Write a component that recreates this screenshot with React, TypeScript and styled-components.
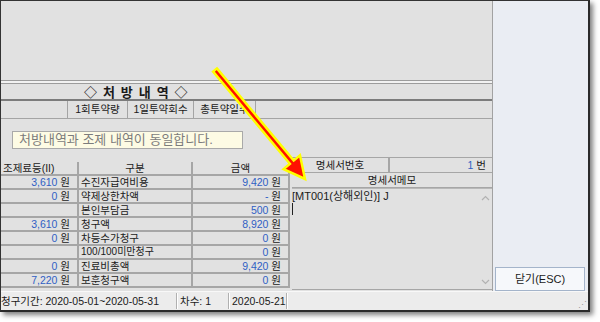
import React from 'react'
import styled, { createGlobalStyle } from 'styled-components'

const GlobalStyle = createGlobalStyle`
  html, body {
    margin: 0;
    background: #ffffff;
  }
  body {
    font-family: "Liberation Sans", "Noto Sans CJK KR", sans-serif;
    font-size: 10.5px;
    color: #1a1a1a;
  }
`

type Row = { charge?: string; label: string; amount: string; small?: boolean }

const rows: Row[] = [
    { charge: '3,610', label: '수진자급여비용', amount: '9,420' },
    { charge: '0', label: '약제상한차액', amount: '-' },
    { label: '본인부담금', amount: '500' },
    { charge: '3,610', label: '청구액', amount: '8,920' },
    { charge: '0', label: '차등수가청구', amount: '0' },
    { label: '100/100미만청구', amount: '0', small: true },
    { charge: '0', label: '진료비총액', amount: '9,420' },
    { charge: '7,220', label: '보훈청구액', amount: '0' },
]

const Arrow = () => (
    <ArrowLayer width="600" height="322" viewBox="0 0 600 322">
        <polygon
            points="216.9,68.4 293.7,160.6 300,155.3 305,179 283.6,169.1 289.9,163.8 213.1,71.6"
            fill="#ff1000"
            stroke="#ffff00"
            strokeWidth="2.5"
            strokeLinejoin="miter"
        />
    </ArrowLayer>
)

const Chevron = ({ down }: { down?: boolean }) => (
    <svg width="9" height="6" viewBox="0 0 9 6">
        <polyline
            points={down ? '1,1 4.5,4.5 8,1' : '1,5 4.5,1.5 8,5'}
            fill="none"
            stroke="#b2b2b2"
            strokeWidth="1.2"
        />
    </svg>
)

export default function App() {
    return <>
        <GlobalStyle />
        <Page>
            <Frame>
                <Body>
                    <Main>
                        <TopBlank />
                        <Rule />
                        <TitleRow>◇ 처 방 내 역 ◇</TitleRow>
                        <HeaderRow>
                            <HeadCell />
                            <HeadCell>1회투약량</HeadCell>
                            <HeadCell>1일투약회수</HeadCell>
                            <HeadCell>총투약일수</HeadCell>
                            <HeadCell />
                        </HeaderRow>
                        <MessageArea>
                            <MessageBox>처방내역과 조제 내역이 동일합니다.</MessageBox>
                        </MessageArea>
                        <Bottom>
                            <AmountTable>
                                <Cell $align="left">조제료등(II)</Cell>
                                <Cell $align="center">구분</Cell>
                                <Cell $align="center">금액</Cell>
                                {rows.map((r, i) => (
                                    <React.Fragment key={i}>
                                        <Cell $align="right">
                                            {r.charge && <><Num>{r.charge}</Num> 원</>}
                                        </Cell>
                                        <Cell $align="left" $small={r.small}>{r.label}</Cell>
                                        <Cell $align="right"><Num>{r.amount}</Num> 원</Cell>
                                    </React.Fragment>
                                ))}
                            </AmountTable>
                            <Memo>
                                <MemoHead>
                                    <MemoCell $align="center">명세서번호</MemoCell>
                                    <MemoCell $align="right"><Num>1</Num> 번</MemoCell>
                                </MemoHead>
                                <MemoTitle>명세서메모</MemoTitle>
                                <MemoBox>
                                    <MemoText>
                                        [MT001(상해외인)] J
                                        <Caret />
                                    </MemoText>
                                    <ScrollTrack>
                                        <Chevron />
                                        <Chevron down />
                                    </ScrollTrack>
                                </MemoBox>
                            </Memo>
                        </Bottom>
                    </Main>
                    <Side>
                        <CloseButton>닫기(ESC)</CloseButton>
                    </Side>
                </Body>
                <StatusBar>
                    <StatusPane $width={173} $first>청구기간: 2020-05-01~2020-05-31</StatusPane>
                    <StatusPane $width={50}>차수: 1</StatusPane>
                    <StatusPane $width={56}>2020-05-21</StatusPane>
                    <StatusPane $width={0} />
                    <Grip>⋰</Grip>
                </StatusBar>
                <Arrow />
            </Frame>
        </Page>
    </>
}

const Page = styled.div`
  width: 600px;
  height: 322px;
  position: relative;
  overflow: hidden;
`

const Frame = styled.div`
  position: relative;
  width: 590px;
  height: 312px;
  box-sizing: border-box;
  border-top: 1px solid #333;
  border-left: 1px solid #333;
  border-right: 2px solid #2a2a2a;
  border-bottom: 2px solid #2a2a2a;
  box-shadow: 3px 3px 5px rgba(0, 0, 0, 0.5);
  display: flex;
  flex-direction: column;
  background: #e1e1e1;
`

const ArrowLayer = styled.svg`
  position: absolute;
  left: -1px;
  top: -1px;
  pointer-events: none;
`

const Body = styled.div`
  display: flex;
  height: 290px;
`

const Main = styled.div`
  width: 491px;
  display: flex;
  flex-direction: column;
  background: #e1e1e1;
  border-right: 1px solid #a2a2a2;
`

const TopBlank = styled.div`
  height: 79px;
`

const Rule = styled.div`
  height: 2px;
  border-top: 1px solid #9c9c9c;
  border-bottom: 1px solid #9c9c9c;
  background: #f2f2f2;
`

const TitleRow = styled.div`
  height: 15px;
  line-height: 15px;
  padding-left: 83px;
  font-family: "Noto Sans CJK KR", sans-serif;
  font-size: 13px;
  font-weight: 700;
  letter-spacing: 1.5px;
  border-bottom: 2px solid #7c7c7c;
`

const HeaderRow = styled.div`
  display: grid;
  grid-template-columns: 67px 60px 66px 62px 1fr;
  height: 17px;
  border-bottom: 1px solid #a4a4a4;
`

const HeadCell = styled.div`
  border-right: 1px solid #a4a4a4;
  text-align: center;
  line-height: 17px;
  white-space: nowrap;
  overflow: hidden;
  &:last-child {
    border-right: none;
  }
`

const MessageArea = styled.div`
  height: 41px;
  padding: 12px 0 0 11px;
  box-sizing: border-box;
`

const MessageBox = styled.div`
  width: 231px;
  height: 18px;
  box-sizing: border-box;
  border: 1px solid #a9a9a9;
  background: #fdfbe4;
  color: #7c7c7c;
  font-size: 13px;
  line-height: 16px;
  padding-left: 6px;
  white-space: nowrap;
`

const Bottom = styled.div`
  flex: 1;
  display: flex;
  align-items: flex-start;
`

const AmountTable = styled.div`
  margin-top: 2px;
  width: 287px;
  display: grid;
  grid-template-columns: 76px 112px 95px;
  grid-auto-rows: 12px;
  gap: 2px;
  padding: 0 2px 2px 0;
  background: #a6a6a6;
`

const Cell = styled.div<{ $align: 'left' | 'center' | 'right'; $small?: boolean }>`
  background: #e1e1e1;
  line-height: 12px;
  white-space: nowrap;
  overflow: hidden;
  text-align: ${p => p.$align};
  padding: ${p => (p.$align === 'right' ? '0 7px 0 0' : p.$align === 'left' ? '0 0 0 2px' : '0')};
  font-size: ${p => (p.$small ? '10px' : '10.5px')};
`

const Num = styled.span`
  color: #2f5fc4;
`

const Memo = styled.div`
  flex: 1;
  margin-left: 2px;
  margin-top: -3px;
  height: 133px;
  display: flex;
  flex-direction: column;
`

const MemoHead = styled.div`
  display: grid;
  grid-template-columns: 96px 1fr;
  gap: 2px;
  height: 14px;
  background: #a6a6a6;
  padding: 1px 0 1px 0;
`

const MemoCell = styled.div<{ $align: 'center' | 'right' }>`
  background: #e1e1e1;
  line-height: 14px;
  text-align: ${p => p.$align};
  padding-right: ${p => (p.$align === 'right' ? '6px' : '0')};
`

const MemoTitle = styled.div`
  height: 14px;
  line-height: 14px;
  text-align: center;
  border-bottom: 1px solid #a6a6a6;
`

const MemoBox = styled.div`
  flex: 1;
  display: flex;
  border-top: 1px solid #b8b8b8;
  border-bottom: 1px solid #a6a6a6;
`

const MemoText = styled.div`
  flex: 1;
  padding: 1px 0 0 0;
  line-height: 13px;
  font-size: 11px;
  white-space: pre;
`

const Caret = styled.div`
  width: 1px;
  height: 12px;
  background: #222;
`

const ScrollTrack = styled.div`
  width: 14px;
  display: flex;
  flex-direction: column;
  justify-content: space-between;
  align-items: center;
  padding: 6px 0 4px;
`

const Side = styled.div`
  flex: 1;
  background: #eaedf3;
  display: flex;
  flex-direction: column;
  justify-content: flex-end;
  align-items: center;
  padding-right: 1px;
`

const CloseButton = styled.div`
  width: 90px;
  height: 24px;
  box-sizing: border-box;
  border: 1px solid #a4b4ca;
  background: #f6f8fb;
  text-align: center;
  line-height: 22px;
  font-size: 11px;
`

const StatusBar = styled.div`
  position: relative;
  flex: 1;
  display: flex;
  align-items: center;
  background: #ececec;
  border-top: 1px solid #f8f8f8;
  font-size: 10.5px;
`

const StatusPane = styled.div<{ $width: number; $first?: boolean }>`
  width: ${p => p.$width}px;
  height: 16px;
  line-height: 16px;
  margin-left: ${p => (p.$first ? '0' : '2px')};
  padding-left: ${p => (p.$first ? '0' : '3px')};
  border-left: ${p => (p.$first ? 'none' : '1px solid #b0b0b0')};
  white-space: nowrap;
  box-sizing: border-box;
  ${p => (p.$first ? '' : 'box-shadow: inset 1px 0 0 #ffffff;')}
`

const Grip = styled.span`
  position: absolute;
  right: 1px;
  bottom: 0;
  color: #9a9a9a;
  font-size: 9px;
`
